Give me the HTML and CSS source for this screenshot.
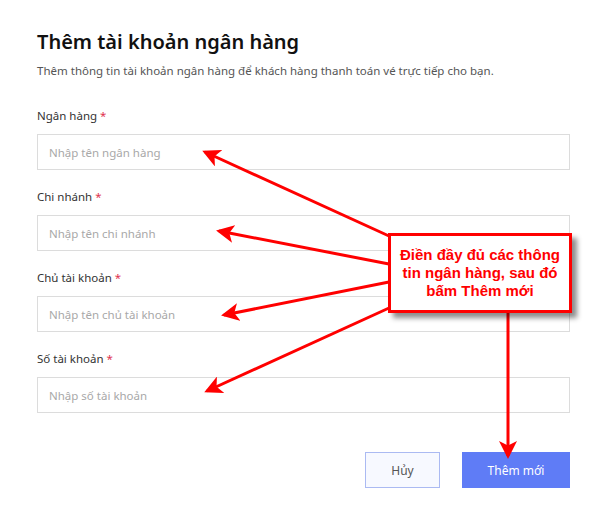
FILE: index.html
```html
<!DOCTYPE html>
<html lang="vi">
<head>
  <meta charset="UTF-8">
  <meta name="viewport" content="width=device-width, initial-scale=1.0">
  <title>Thêm tài khoản ngân hàng</title>
  <link rel="stylesheet" href="styles.css">
</head>
<body>
  <div class="container">
    <h1>Thêm tài khoản ngân hàng</h1>
    <p class="subtitle">Thêm thông tin tài khoản ngân hàng để khách hàng thanh toán vé trực tiếp cho bạn.</p>

    <form>
      <div class="field">
        <label>Ngân hàng <span class="req">*</span></label>
        <input type="text" placeholder="Nhập tên ngân hàng">
      </div>
      <div class="field">
        <label>Chi nhánh <span class="req">*</span></label>
        <input type="text" placeholder="Nhập tên chi nhánh">
      </div>
      <div class="field">
        <label>Chủ tài khoản <span class="req">*</span></label>
        <input type="text" placeholder="Nhập tên chủ tài khoản">
      </div>
      <div class="field">
        <label>Số tài khoản <span class="req">*</span></label>
        <input type="text" placeholder="Nhập số tài khoản">
      </div>

      <div class="actions">
        <button type="button" class="btn btn-cancel">Hủy</button>
        <button type="button" class="btn btn-primary">Thêm mới</button>
      </div>
    </form>
  </div>

  <!-- annotation layer -->
  <svg class="arrows" width="606" height="516" viewBox="0 0 606 516">
    <defs>
      <marker id="head" markerWidth="6" markerHeight="6" refX="5" refY="3" orient="auto" markerUnits="strokeWidth">
        <path d="M0,0 L6,3 L0,6 L1.5,3 Z" fill="#f00"/>
      </marker>
    </defs>
    <g stroke="#f00" stroke-width="3" fill="none" marker-end="url(#head)">
      <line x1="389" y1="236" x2="205" y2="152"/>
      <line x1="389" y1="264" x2="219" y2="231"/>
      <line x1="389" y1="282" x2="224" y2="315"/>
      <line x1="389" y1="308" x2="207" y2="391"/>
      <line x1="508" y1="310" x2="508" y2="456"/>
    </g>
  </svg>
  <div class="callout">Điền đầy đủ các thông tin ngân hàng, sau đó bấm Thêm mới</div>
</body>
</html>
```

FILE: styles.css
```css
body {
  margin: 0;
  font-family: "Noto Sans", sans-serif;
  color: #222;
  background: #fff;
}

.container {
  width: 533px;
  padding: 27px 0 0 37px;
}

h1 {
  margin: 0;
  font-size: 20px;
  line-height: 30px;
  font-weight: 600;
  color: #111;
}

.subtitle {
  margin: 6px 0 0;
  font-size: 11.5px;
  line-height: 16px;
  color: #555;
}

form {
  margin-top: 28px;
}

.field {
  margin-bottom: 18px;
}

.field label {
  display: block;
  font-size: 11.5px;
  line-height: 18px;
  color: #333;
  margin-bottom: 9px;
}

.req {
  color: #e0334f;
}

.field input {
  display: block;
  box-sizing: border-box;
  width: 100%;
  height: 36px;
  border: 1px solid #dcdcdc;
  padding: 0 11px;
  font-family: inherit;
  font-size: 11.5px;
  color: #333;
  outline: none;
}

.field input::placeholder {
  color: #a8a8a8;
}

.actions {
  display: flex;
  justify-content: flex-end;
  gap: 22px;
  margin-top: 39px;
}

.btn {
  height: 36px;
  font-family: inherit;
  font-size: 12px;
  cursor: pointer;
}

.btn-cancel {
  width: 75px;
  background: #f7f9ff;
  border: 1px solid #abbaf2;
  color: #555;
}

.btn-primary {
  width: 108px;
  background: #5f7cf6;
  border: none;
  color: #fff;
}

.arrows {
  position: absolute;
  top: 0;
  left: 0;
  pointer-events: none;
}

.callout {
  position: absolute;
  left: 388px;
  top: 233px;
  width: 170px;
  height: 64px;
  padding: 10px 4px 0;
  border: 3px solid #f00;
  background: #fff;
  box-shadow: 5px 5px 5px rgba(0, 0, 0, 0.45);
  font-family: "Liberation Sans", Arial, sans-serif;
  font-weight: bold;
  font-size: 15px;
  line-height: 18px;
  color: #f00;
  text-align: center;
}
```
